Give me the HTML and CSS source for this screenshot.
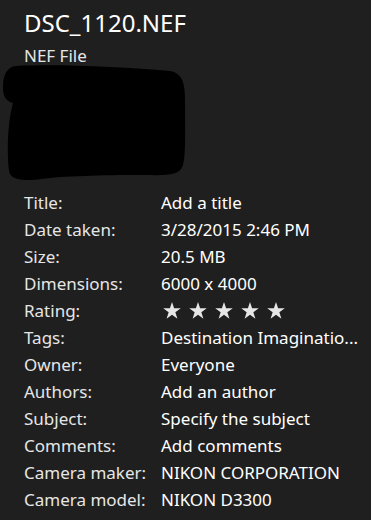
FILE: index.html
```html
<!DOCTYPE html>
<html>
<head>
<meta charset="utf-8">
<link rel="stylesheet" href="styles.css">
</head>
<body>
<div class="panel">
  <h1 class="name">DSC_1120.NEF</h1>
  <div class="type">NEF File</div>
  <svg class="thumb" width="190" height="116" viewBox="0 0 190 116">
    <path d="M14 1 C60 -1 120 2 168 6 C180 8 183 18 183 34 C183 60 184 90 181 100 C178 112 160 110 140 110 C100 110 60 111 40 114 C25 116 8 116 7 106 C5 90 5 60 11 38 C4 36 1 32 1 22 C1 8 6 2 14 1 Z" fill="#000"/>
  </svg>
  <div class="props">
    <div class="k">Title:</div><div class="v">Add a title</div>
    <div class="k">Date taken:</div><div class="v">3/28/2015 2:46 PM</div>
    <div class="k">Size:</div><div class="v">20.5 MB</div>
    <div class="k">Dimensions:</div><div class="v">6000 x 4000</div>
    <div class="k">Rating:</div>
    <div class="v stars">
      <svg class="star" viewBox="0 0 20 19"><path d="M10 0 L12.35 7.1 L19.8 7.1 L13.75 11.5 L16.05 18.6 L10 14.2 L3.95 18.6 L6.25 11.5 L0.2 7.1 L7.65 7.1 Z"/></svg>
      <svg class="star" viewBox="0 0 20 19"><path d="M10 0 L12.35 7.1 L19.8 7.1 L13.75 11.5 L16.05 18.6 L10 14.2 L3.95 18.6 L6.25 11.5 L0.2 7.1 L7.65 7.1 Z"/></svg>
      <svg class="star" viewBox="0 0 20 19"><path d="M10 0 L12.35 7.1 L19.8 7.1 L13.75 11.5 L16.05 18.6 L10 14.2 L3.95 18.6 L6.25 11.5 L0.2 7.1 L7.65 7.1 Z"/></svg>
      <svg class="star" viewBox="0 0 20 19"><path d="M10 0 L12.35 7.1 L19.8 7.1 L13.75 11.5 L16.05 18.6 L10 14.2 L3.95 18.6 L6.25 11.5 L0.2 7.1 L7.65 7.1 Z"/></svg>
      <svg class="star" viewBox="0 0 20 19"><path d="M10 0 L12.35 7.1 L19.8 7.1 L13.75 11.5 L16.05 18.6 L10 14.2 L3.95 18.6 L6.25 11.5 L0.2 7.1 L7.65 7.1 Z"/></svg>
    </div>
    <div class="k">Tags:</div><div class="v">Destination Imaginatio...</div>
    <div class="k">Owner:</div><div class="v">Everyone</div>
    <div class="k">Authors:</div><div class="v">Add an author</div>
    <div class="k">Subject:</div><div class="v">Specify the subject</div>
    <div class="k">Comments:</div><div class="v">Add comments</div>
    <div class="k">Camera maker:</div><div class="v">NIKON CORPORATION</div>
    <div class="k">Camera model:</div><div class="v">NIKON D3300</div>
  </div>
</div>
</body>
</html>
```
FILE: styles.css
```css
html, body {
  margin: 0;
  padding: 0;
  background: #1f1f1f;
}
.panel {
  width: 371px;
  height: 520px;
  box-sizing: border-box;
  padding: 9px 0 0 24px;
  font-family: "Noto Sans", "Open Sans", sans-serif;
  color: #f2f2f2;
  overflow: hidden;
}
.name {
  margin: 0;
  font-size: 24px;
  font-weight: 400;
  line-height: 28px;
  color: #fff;
}
.type {
  font-size: 17px;
  line-height: 22px;
  margin-top: 8px;
  color: #e6e6e6;
}
.thumb {
  display: block;
  margin: -2px 0 0 -22px;
}
.props {
  display: grid;
  grid-template-columns: 137px auto;
  grid-auto-rows: 27px;
  margin-top: 8px;
  font-size: 17px;
  line-height: 27px;
}
.k { color: #e6e6e6; white-space: nowrap; }
.v { color: #fff; white-space: nowrap; }
.stars {
  display: flex;
  align-items: center;
  gap: 8px;
  padding-left: 2px;
  padding-bottom: 1px;
}
.star {
  width: 18px;
  height: 17px;
  fill: #e6e6e6;
}
```
